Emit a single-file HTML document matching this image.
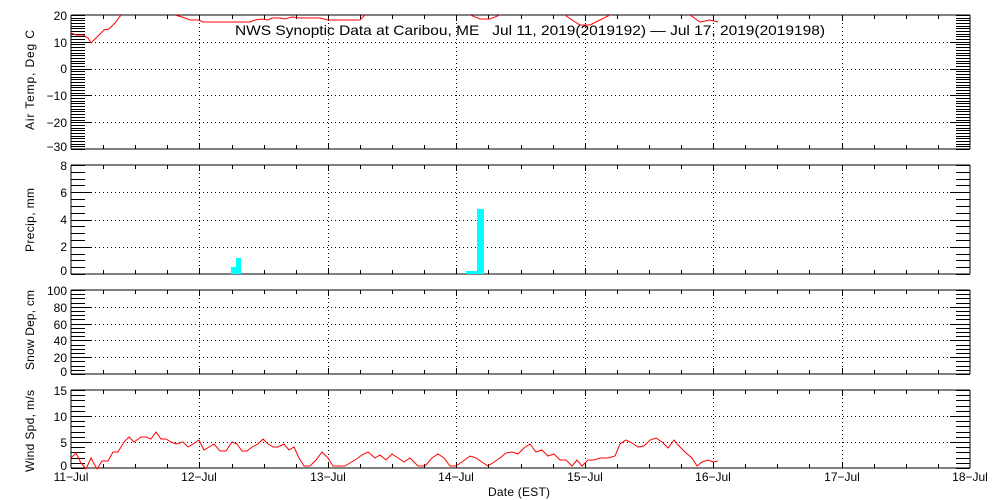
<!DOCTYPE html>
<html><head><meta charset="utf-8"><style>
html,body{margin:0;padding:0;background:#fff;}
svg{display:block;font-family:"Liberation Sans",sans-serif;}
</style></head><body>
<svg id="s" width="1000" height="500" viewBox="0 0 1000 500" xmlns="http://www.w3.org/2000/svg">
<g id="g" stroke="#000" stroke-width="1" fill="none" shape-rendering="crispEdges"></g>
<g fill="#00ffff" shape-rendering="crispEdges">
<rect x="231" y="267" width="5" height="7"/>
<rect x="236" y="258" width="5" height="16"/>
<rect x="466" y="271" width="11" height="3"/>
<rect x="477" y="209" width="7" height="65"/>
</g>
<svg x="71" y="15" width="899" height="134" viewBox="71 15 899 134" overflow="hidden">
<polyline fill="none" stroke="#f00" stroke-width="1" points="71,33 76,35 83,35 88,38 91,43 96,38 100,34 104,30 109,29 115,23 121,15 125,9"/>
<polyline fill="none" stroke="#f00" stroke-width="1" points="170,10 175,15 182,17 190,20 199,20 203,22 250,22 255,20 262,19 268,20 272,18 280,18 285,19 292,17 300,18 320,18 328,20 360,20 365,15 368,10"/>
<polyline fill="none" stroke="#f00" stroke-width="1" points="465,10 470,15 480,19 490,19 500,15 505,10"/>
<polyline fill="none" stroke="#f00" stroke-width="1" points="560,10 565,15 572,20 580,25 590,25 600,20 610,15 615,10"/>
<polyline fill="none" stroke="#f00" stroke-width="1" points="685,10 690,15 700,22 710,20 718,22"/>
</svg>
<polyline fill="none" stroke="#f00" stroke-width="1" points="71,458 76,453 81,463 86,469 91,458 97,469 102,461 108,461 113,452 118,452 124,442 129,437 134,442 141,437 146,437 151,439 156,432 161,439 166,439 171,442 176,444 183,442 188,447 193,444 199,440 204,450 209,447 214,444 220,451 226,451 232,442 237,444 242,451 247,451 252,447 258,444 263,439 268,444 273,447 278,447 284,444 289,450 294,447 299,458 304,466 310,466 316,460 322,452 328,458 333,466 345,466 355,460 362,455 368,452 375,458 380,455 386,460 392,454 398,458 404,462 410,458 418,466 425,466 432,458 438,454 444,458 450,466 456,466 462,462 470,456 476,458 482,462 488,466 494,462 500,458 506,453 512,452 518,454 524,448 530,444 536,452 542,450 548,456 554,454 560,460 566,460 572,466 577,460 582,466 588,460 594,460 600,458 608,458 615,456 620,444 626,440 632,443 638,447 644,446 650,440 656,438 662,442 668,448 674,440 680,447 686,453 692,458 697,466 702,462 708,460 713,462 718,461"/>
<g font-size="12" fill="#000" text-anchor="end">
<text x="67" y="20">20</text><text x="67" y="47">10</text><text x="67" y="73">0</text><text x="67" y="100">−10</text><text x="67" y="127">−20</text><text x="67" y="151">−30</text>
<text x="67" y="170">8</text><text x="67" y="197">6</text><text x="67" y="224">4</text><text x="67" y="251">2</text><text x="67" y="275">0</text>
<text x="67" y="295">100</text><text x="67" y="312">80</text><text x="67" y="329">60</text><text x="67" y="345">40</text><text x="67" y="362">20</text><text x="67" y="376">0</text>
<text x="67" y="395">15</text><text x="67" y="421">10</text><text x="67" y="447">5</text><text x="67" y="470">0</text>
</g>
<g font-size="12" fill="#000" text-anchor="middle">
<text x="71" y="481">11−Jul</text><text x="199" y="481">12−Jul</text><text x="328" y="481">13−Jul</text><text x="456" y="481">14−Jul</text><text x="585" y="481">15−Jul</text><text x="713" y="481">16−Jul</text><text x="842" y="481">17−Jul</text><text x="970" y="481">18−Jul</text>
<text x="519" y="496" textLength="62">Date (EST)</text>
<text x="530" y="35" font-size="14" style="white-space:pre" textLength="590" lengthAdjust="spacingAndGlyphs">NWS Synoptic Data at Caribou, ME   Jul 11, 2019(2019192) — Jul 17, 2019(2019198)</text>
<text transform="translate(34,80) rotate(-90)" textLength="100">Air Temp, Deg C</text>
<text transform="translate(34,220) rotate(-90)" textLength="64">Precip, mm</text>
<text transform="translate(34,330) rotate(-90)" textLength="80">Snow Dep, cm</text>
<text transform="translate(34,431) rotate(-90)" textLength="82">Wind Spd, m/s</text>
</g>
</svg>
<script>
var g=document.getElementById('g'),L=71,R=970,ns='http://www.w3.org/2000/svg';
function ln(x1,y1,x2,y2,d){var e=document.createElementNS(ns,'line');e.setAttribute('x1',x1);e.setAttribute('y1',y1);e.setAttribute('x2',x2);e.setAttribute('y2',y2);if(d)e.setAttribute('stroke-dasharray','1,3');g.appendChild(e);}
var P=[[15,149,20,-30,1,10],[165,274,8,0,0.5,2],[290,374,100,0,5,20],[390,468,15,0,1,5]];
var dw=(R-L)/7;
P.forEach(function(p){var t=p[0],b=p[1],hi=p[2],lo=p[3];
 ln(L,t,R,t);ln(L,b,R,b);ln(L,t,L,b);ln(R,t,R,b);
 function Y(v){return Math.round(t+(hi-v)/(hi-lo)*(b-t))+0.5;}
 for(var v=lo;v<=hi+1e-6;v+=p[4]){var y=Y(v);ln(L,y,L+14,y);ln(R-14,y,R,y);}
 for(var v=lo+p[5];v<hi-1e-6;v+=p[5]){var y=Y(v);ln(L,y,R,y,1);ln(L,y,L+20,y);ln(R-20,y,R,y);}
 for(var i=1;i<28;i++){var x=Math.round(L+i*dw/4)+0.5;if(i%4==0){ln(x,t,x,b,1);ln(x,t,x,t+6);ln(x,b-6,x,b);}else{ln(x,t,x,t+4);ln(x,b-4,x,b);}}
});
</script>
</body></html>
